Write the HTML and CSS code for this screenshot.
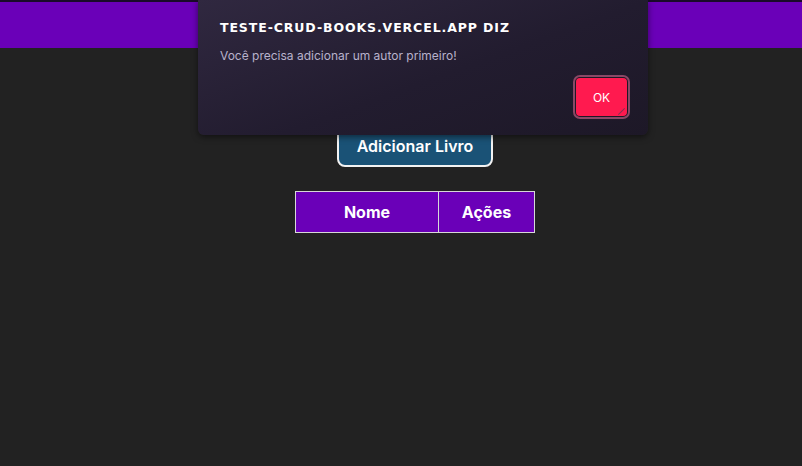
FILE: index.html
```html
<!DOCTYPE html>
<html lang="pt-BR">
<head>
<meta charset="utf-8">
<title>Livros</title>
<link rel="stylesheet" href="styles.css">
</head>
<body>
<header class="topbar"></header>
<main class="content">
  <button class="add-btn">Adicionar Livro</button>
  <table class="books">
    <thead>
      <tr><th class="col-name">Nome</th><th class="col-actions">Ações</th></tr>
    </thead>
  </table>
</main>
<div class="dialog">
  <div class="dialog-title">TESTE-CRUD-BOOKS.VERCEL.APP DIZ</div>
  <div class="dialog-msg">Você precisa adicionar um autor primeiro!</div>
  <div class="dialog-actions"><button class="ok-btn">OK</button></div>
</div>
</body>
</html>
```
FILE: styles.css
```css
html, body { margin: 0; padding: 0; }
body {
  background: #222222;
  font-family: Inter, "Liberation Sans", sans-serif;
  height: 466px;
  overflow: hidden;
}
.topbar {
  height: 46px;
  background: #6a00b8;
  border-top: 2px solid #1a0a2a;
}
.content {
  display: flex;
  flex-direction: column;
  align-items: center;
  padding-top: 76px;
  padding-left: 28px;
}
.add-btn {
  width: 156px;
  height: 43px;
  background: #1a5276;
  color: #fff;
  border: 2px solid #f2f2f2;
  border-radius: 8px;
  font-family: Inter, "Liberation Sans", sans-serif;
  font-weight: 600;
  font-size: 16px;
}
.books {
  margin-top: 24px;
  border-collapse: collapse;
}
.books th {
  background: #6a00b8;
  color: #fff;
  border: 1px solid #d8d8d8;
  height: 40px;
  font-weight: 700;
  font-size: 16px;
  padding: 0;
}
.col-name { width: 142px; }
.col-actions { width: 95px; }
.dialog {
  position: absolute;
  left: 198px;
  top: 0;
  width: 450px;
  height: 135px;
  box-sizing: border-box;
  padding: 20px 19px 0 22px;
  background: linear-gradient(160deg, #302840 0%, #221c2f 55%, #1d1827 100%);
  border-radius: 0 0 6px 6px;
  box-shadow: 0 2px 6px rgba(0,0,0,0.5);
}
.dialog-title {
  font-family: "DejaVu Sans", sans-serif;
  font-weight: 700;
  font-size: 12.5px;
  letter-spacing: 0.9px;
  color: #ffffff;
  line-height: 16px;
}
.dialog-msg {
  margin-top: 12px;
  font-size: 12px;
  color: #b8b2cc;
  line-height: 16px;
}
.dialog-actions {
  display: flex;
  justify-content: flex-end;
  margin-top: 12px;
}
.ok-btn {
  position: relative;
  width: 55px;
  height: 42px;
  background: #ff1a4f;
  border: 2px solid #1e1826;
  outline: 2px solid #8a4866;
  outline-offset: -1px;
  border-radius: 6px;
  color: #fff;
  font-family: Inter, "Liberation Sans", sans-serif;
  font-size: 12px;
}
.ok-btn::after {
  content: "";
  position: absolute;
  right: 1px;
  bottom: 4px;
  width: 9px;
  height: 1px;
  background: #8a3050;
  transform: rotate(-45deg);
}
```
